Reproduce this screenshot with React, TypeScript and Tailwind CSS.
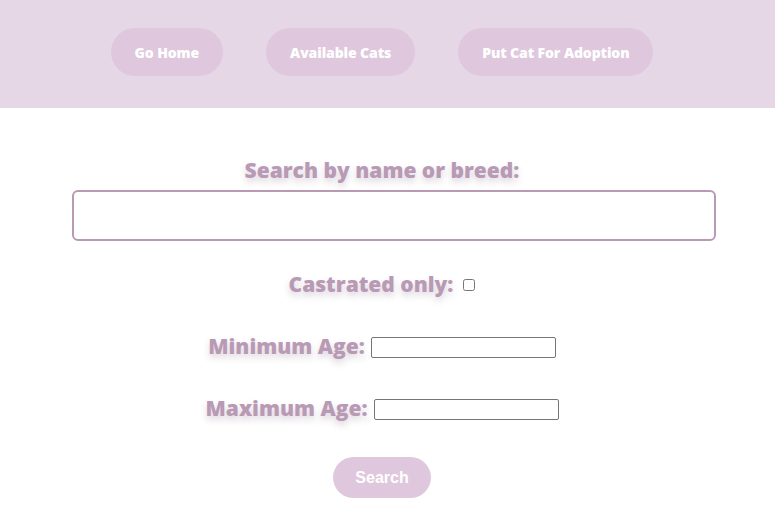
import React from 'react';

const navLinks = ['Go Home', 'Available Cats', 'Put Cat For Adoption'];

const labelCls =
  "font-['Open_Sans',sans-serif] font-extrabold text-[21px] leading-[30px] text-[#b99ab5] [text-shadow:0_4px_6px_rgba(120,90,120,0.25)]";

export default function App() {
  return (
    <div className="min-h-[530px] bg-white">
      <header className="h-[108px] bg-[#e6d7e6] flex items-center justify-center gap-[43px] pr-[11px] pb-[4px]">
        {navLinks.map((l) => (
          <button
            key={l}
            className="h-[48px] px-[24px] rounded-full bg-[#dfc8dd] text-white text-[14px] font-extrabold font-['Open_Sans',sans-serif] tracking-[-0.1px]"
          >
            {l}
          </button>
        ))}
      </header>

      <main className="flex flex-col items-center pt-[47px] pr-[11px]">
        <label className={labelCls}>Search by name or breed:</label>
        <input
          type="text"
          className="mt-[5px] w-[644px] h-[51px] ml-[24px] border-2 border-[#b99ab5] rounded-md bg-white"
        />

        <div className="mt-[28px] flex items-center gap-[10px]">
          <label className={labelCls}>Castrated only:</label>
          <input type="checkbox" className="w-[12px] h-[12px] mt-[2px]" />
        </div>

        <div className="mt-[32px] flex items-center gap-[6px]">
          <label className={labelCls}>Minimum Age:</label>
          <input type="text" className="w-[185px] h-[21px] border border-[#767676] rounded-[2px] mt-[3px]" />
        </div>

        <div className="mt-[32px] flex items-center gap-[6px]">
          <label className={labelCls}>Maximum Age:</label>
          <input type="text" className="w-[185px] h-[21px] border border-[#767676] rounded-[2px] mt-[3px]" />
        </div>

        <button className="mt-[34px] w-[98px] h-[41px] rounded-full bg-[#dfc8dd] text-white text-[16px] font-bold font-['Liberation_Sans',Arial,sans-serif]">
          Search
        </button>
      </main>
    </div>
  );
}
